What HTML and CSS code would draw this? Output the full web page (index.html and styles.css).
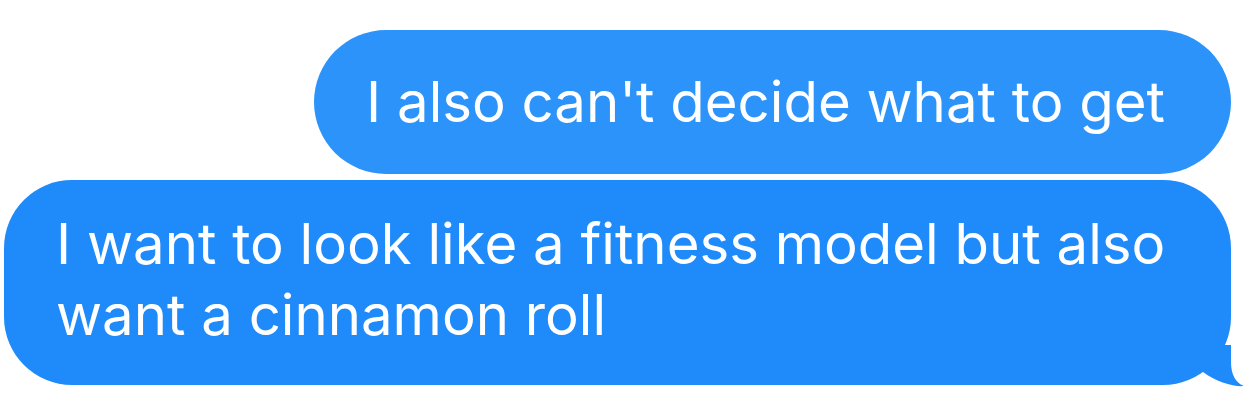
FILE: index.html
```html
<!DOCTYPE html>
<html>
<head>
<meta charset="utf-8">
<link rel="stylesheet" href="styles.css">
</head>
<body>
<div class="thread">
  <div class="bubble bubble-first">I also can't decide what to get</div>
  <div class="bubble bubble-last">I want to look like a fitness model but also want a cinnamon roll
    <svg class="tail" width="50" height="42" viewBox="0 0 50 42"><path d="M37 0 L37 17 C37 30 42 38 50 41 C40 42 22 37 9 27 L0 20 L0 0 Z" fill="#1f8afa"/></svg>
  </div>
</div>
</body>
</html>
```
FILE: styles.css
```css
html, body {
  margin: 0;
  padding: 0;
  background: #ffffff;
}
.thread {
  width: 1243px;
  height: 415px;
  box-sizing: border-box;
  padding: 30px 12px 0 4px;
  display: flex;
  flex-direction: column;
  align-items: flex-end;
  gap: 6px;
  font-family: Inter, "Liberation Sans", sans-serif;
  color: #ffffff;
}
.bubble {
  position: relative;
  font-size: 56.3px;
  line-height: 71px;
  letter-spacing: 0;
  border-radius: 72px;
  box-sizing: border-box;
}
.bubble-first {
  background: #2b93f9;
  height: 144px;
  padding: 36px 66px 0 52px;
}
.bubble-last {
  align-self: stretch;
  background: #1f8afa;
  height: 205px;
  border-radius: 68px;
  padding: 28px 50px 0 52px;
}
.tail {
  position: absolute;
  right: -13px;
  bottom: -2px;
  display: block;
}
```
